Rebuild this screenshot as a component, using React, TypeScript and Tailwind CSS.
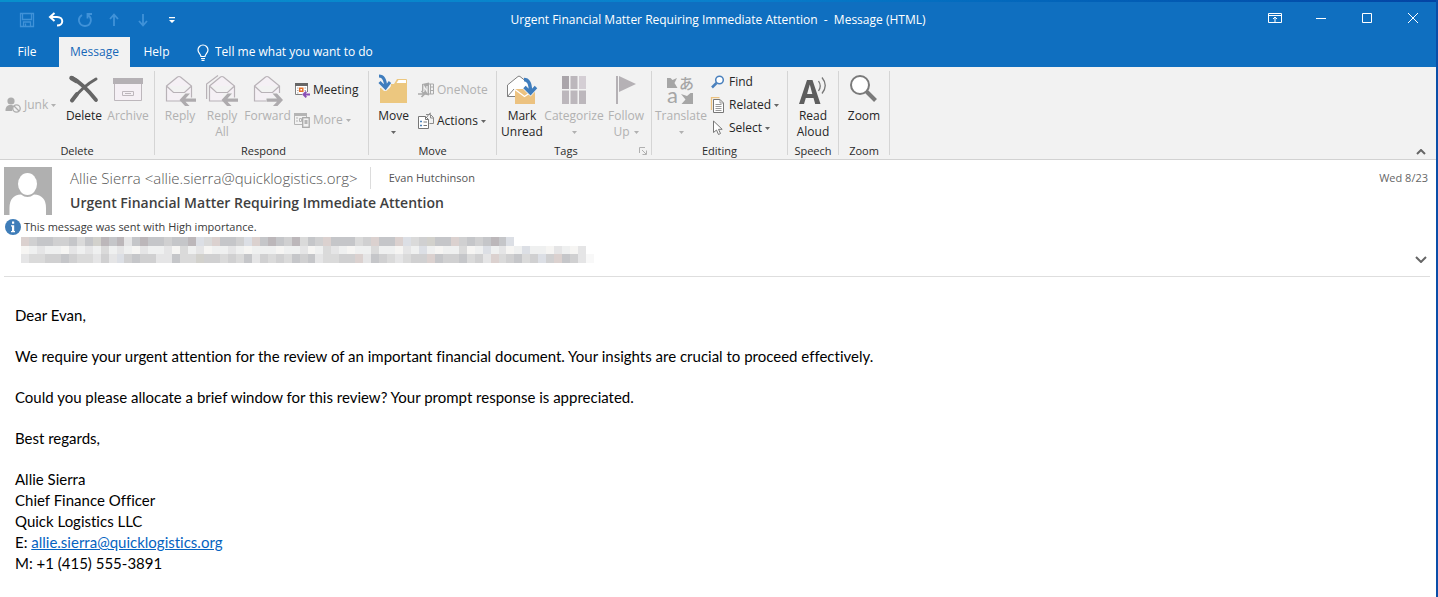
import type { ReactNode } from "react";

function Caret({ className = "" }: { className?: string }) {
  return (
    <svg viewBox="0 0 5 3" className={`h-[3px] w-[5px] shrink-0 ${className}`} fill="currentColor" aria-hidden="true">
      <path d="M0 0h5L2.5 3z" />
    </svg>
  );
}

function Group({ label, className, children, launcher }: { label: string; className: string; children: ReactNode; launcher?: boolean }) {
  return (
    <section aria-label={label} className={`flex h-[92px] shrink-0 pt-1 ${className}`}>
      <div className="flex min-w-0 grow flex-col">
        <div className="flex h-[72px] items-start">{children}</div>
        <div className="flex h-4 items-center">
          <span className="grow text-center text-[11px] leading-4 text-[#2b2b2b]">{label}</span>
          {launcher && (
            <button type="button" aria-label="Tags options" className="mx-1 text-[#b0b0b0]">
              <svg viewBox="0 0 8 8" className="size-2" fill="none" stroke="currentColor">
                <path d="M.5 6V.5H6M3 3l4 4M7.5 3.5v4h-4" />
              </svg>
            </button>
          )}
        </div>
      </div>
      <div className="mb-1 w-px bg-[#d5d5d5]" />
    </section>
  );
}

interface BigProps {
  icon: ReactNode;
  lines: string[];
  className: string;
  off?: boolean;
  caret?: "below" | "inline";
}

function Big({ icon, lines, className, off, caret }: BigProps) {
  const last = lines.length - 1;
  return (
    <button type="button" disabled={off} className={`flex shrink-0 flex-col items-center whitespace-nowrap text-[12px] leading-4 ${off ? "text-[#b1b1b1]" : "text-[#262626]"} ${className}`}>
      <span className="flex h-[37px] items-center justify-center">{icon}</span>
      {lines.map((l, i) => (
        <span key={l} className="flex items-center gap-1">
          {l}
          {caret === "inline" && i === last && <Caret />}
        </span>
      ))}
      {caret === "below" && (
        <span className="flex h-4 items-center">
          <Caret className={off ? "" : "text-[#666]"} />
        </span>
      )}
    </button>
  );
}

function Small({ icon, label, off, caret }: { icon: ReactNode; label: string; off?: boolean; caret?: boolean }) {
  return (
    <button type="button" disabled={off} className={`flex items-center gap-[3px] whitespace-nowrap text-[12px] leading-4 ${off ? "text-[#b1b1b1]" : "text-[#262626]"}`}>
      <span className="flex w-4 shrink-0 justify-center">{icon}</span>
      {label}
      {caret && <Caret className={off ? "" : "text-[#666]"} />}
    </button>
  );
}

const envelope = "M1.5 12 12.500 3q1.500-1 3 0l11 9V27H1.500zM1.500 12 8.500 18.500h11l7-6.500";

function ReplyIcon({ all, forward }: { all?: boolean; forward?: boolean }) {
  return (
    <svg viewBox="0 0 32 32" className="size-8" fill="#f5f0f5" stroke="#b8b2b7" strokeWidth="1.200" aria-hidden="true">
      {all && <path d="M.6 25V10L12 1.500" fill="none" />}
      <g transform={all ? "translate(2 0)" : "translate(1 0)"}>
        <path d={envelope} />
      </g>
      {forward ? (
        <g stroke="none">
          <path d="M21 19h9v13h-9zM14 23.500h8v5h-8z" fill="#f2f2f2" />
          <path d="m31 26-6-6.500h-4.500l4.500 5H14.500v3.200H25l-4.500 4.800H25z" fill="#aeabae" />
        </g>
      ) : (
        <g stroke="none">
          <path d="M17 19h9v13h-9zM25 23.500h6v5h-6z" fill="#f2f2f2" />
          <path d="m15.500 26 6-6.500H26l-4.500 5H32v3.200H21.500L26 32.500h-4.500z" fill="#aeabae" />
        </g>
      )}
    </svg>
  );
}

const JunkIcon = () => (
  <svg viewBox="0 0 16 16" className="size-4" aria-hidden="true">
    <circle cx="6" cy="4" r="3.600" fill="#adadad" />
    <path d="M.5 13.500c0-4 2-5.500 5-5.500 1.500 0 2.500.3 3.500 1L7 14H.5z" fill="#adadad" />
    <circle cx="11.500" cy="11.500" r="3.700" fill="#f2f2f2" stroke="#adadad" strokeWidth="1.300" />
    <path d="m9 9 5 5" stroke="#adadad" strokeWidth="1.300" />
  </svg>
);

const DeleteIcon = () => (
  <svg viewBox="0 0 32 32" className="size-8" fill="none" stroke="#666" strokeLinecap="round" aria-hidden="true">
    <path d="M4 4c8 4 16 12 24 22" strokeWidth="3.800" />
    <path d="M28 5C19 10 11 17 4 26.500" strokeWidth="3" />
    <path d="M9 20 4 26.500" strokeWidth="4" />
    <path d="m3.500 4 5 3" strokeWidth="4.500" />
  </svg>
);

const ArchiveIcon = () => (
  <svg viewBox="0 0 32 28" className="h-7 w-8" aria-hidden="true">
    <path d="M2.500 7h27v17.500h-27z" fill="#f5f0f5" stroke="#bdb7bc" />
    <path d="M1 2h30v6H1z" fill="#b5b1b5" />
    <path d="M10.500 15.500h11v4h-11zM13 17.500h6" fill="none" stroke="#bdb7bc" />
  </svg>
);

const MeetingIcon = () => (
  <svg viewBox="0 0 16 16" className="size-4" aria-hidden="true">
    <path d="M1.500 1.500h12v11h-12z" fill="#fff" stroke="#808080" />
    <path d="M1 1h13v3H1z" fill="#666" />
    <path d="M3 6h1.500M3 8.500h1.500M3 11h1.500M10.500 6H12M10.500 8.500H12" stroke="#aaa" />
    <path d="M5.700 6.200h3.100v3H5.700z" fill="#fff" stroke="#e5702a" strokeWidth="1.500" />
    <path d="M8 10h8v6H8z" fill="#f2f2f2" />
    <path d="M16 12.500h-6.500M12.300 9.700l-2.800 2.800 2.800 2.800" fill="none" stroke="#8a4fb5" strokeWidth="1.900" />
  </svg>
);

const MoreIcon = () => (
  <svg viewBox="0 0 16 16" className="size-4" aria-hidden="true">
    <path d="M.5 1.500h12v11H.5z" fill="none" stroke="#b5b5b5" />
    <path d="M0 1h13v3H0z" fill="#b5b5b5" />
    <path d="M2 6h2M2 9h2M5.500 6.500h2v3h-2z" fill="none" stroke="#b5b5b5" />
    <rect x="8.700" y="5.700" width="6.500" height="9.600" fill="#f2f2f2" stroke="#a8a8a8" strokeWidth="1.300" />
    <path d="M10.500 8h3v4h-3z" fill="#b5b5b5" />
  </svg>
);

const MoveIcon = () => (
  <svg viewBox="0 0 32 32" className="size-8" aria-hidden="true">
    <path d="M2 10h14l3-5h9q1 0 1 1v23H2z" fill="#ecc77f" />
    <path d="M20.500 6h7.500v3H18.500z" fill="#fff" />
    <path d="M0 0h13v12l-3 5H4l-4-5z" fill="#f2f2f2" />
    <path d="M2 14h1l4 4 6-5v6H2z" fill="#ecc77f" />
    <path d="M1 2q6.500 0 6.500 11M1.500 8l6 6 4.500-6" fill="none" stroke="#3f7dbd" strokeWidth="3" />
  </svg>
);

const OneNoteIcon = () => (
  <svg viewBox="0 0 16 16" className="size-4" fill="none" stroke="#aaa" aria-hidden="true">
    <path d="M10 2h5.500v10H10M12.500 2v10M13 5h3M13 8.500h3" />
    <path d="M4 2 11 .5v13L4 12z" fill="#aaa" stroke="none" />
    <path d="M6 9.500V4.500l3 5V4" stroke="#f2f2f2" strokeWidth="1.200" />
    <path d="M0 9h6v6H0z" fill="#f2f2f2" stroke="none" />
    <path d="M0 12h6M3.500 9l3 3-3 3" strokeWidth="1.700" />
  </svg>
);

const ActionsIcon = () => (
  <svg viewBox="0 0 16 18" className="h-[18px] w-4" fill="none" stroke="#777" aria-hidden="true">
    <path d="M8 2.500h4.500l3 3v6h-4M9 5q2-4 4-4M12.500 3v3h3" stroke="#8b8b8b" />
    <path d="M.5 4.500h7l3 3v9H.5z" fill="#fff" />
    <path d="M7.500 4.500v3h3M5.500 10H9M5.500 13.500H9" />
    <path d="M2.500 9h1v1h-1zM2.500 13h1v1h-1z" stroke="#4d82b8" />
  </svg>
);

const UnreadIcon = () => (
  <svg viewBox="0 0 32 32" className="size-8" aria-hidden="true">
    <path d="M1.500 22.500V11L12 2.500q1-.8 2 0l9 8V22.500" fill="#fff" />
    <path d="M9 22.500H1.500V11L12 2.500q1-.8 2 0l5 4M1.500 22.500 8 15" fill="none" stroke="#808080" />
    <path d="M9 15h20v15H9z" fill="#ecc280" />
    <path d="m9 15.500 9.500 7 10.500-7" fill="none" stroke="#fff" strokeWidth="1.300" />
    <path d="M18 5q7 0 7 11M18.500 13l6 6 5.500-6" fill="none" stroke="#f2f2f2" strokeWidth="5" />
    <path d="M18 5.500q6.500 0 6.500 12M18.500 13l6 6 5.500-6" fill="none" stroke="#3f7dbd" strokeWidth="3.400" />
  </svg>
);

const CategorizeIcon = () => (
  <svg viewBox="0 0 24 28" className="h-7 w-6" aria-hidden="true">
    <path d="M0 0h7v13H0z" fill="#aaa5aa" />
    <path d="M8.500 0h7v13h-7z" fill="#bcb7bc" />
    <path d="M17 0h7v13h-7z" fill="#d4ced4" />
    <path d="M0 14.500h7V28H0zM8.500 14.500h7V28h-7zM17 14.500h7V28h-7z" fill="#bcb7bc" />
  </svg>
);

const FlagIcon = () => (
  <svg viewBox="0 0 20 30" className="h-[30px] w-5" aria-hidden="true">
    <path d="M0 1h2v28H0z" fill="#b5b1b5" />
    <path d="m3 1 17 8L3 17z" fill="#b5b1b5" />
  </svg>
);

const TranslateIcon = () => (
  <svg viewBox="0 0 36 36" className="size-9" fill="#a6a6a6" aria-hidden="true">
    <path d="M4 6h3.500l2 2L14 6l-2.500 5 3 5H4zM30 32H18.500l4-4.500L18 22l6 2 3.500-3H30z" />
    <text x="16" y="17" fontSize="15" fontWeight="500" fontFamily="Noto Sans CJK JP, sans-serif">あ</text>
    <text x="4" y="31" fontSize="22" fontFamily="Lato, sans-serif">a</text>
  </svg>
);

const FindIcon = () => (
  <svg viewBox="0 0 16 16" className="size-4" fill="none" stroke="#4a80bd" aria-hidden="true">
    <circle cx="9.500" cy="6" r="3.800" strokeWidth="1.500" fill="#fff" />
    <path d="m6.500 9-4.500 4.500" strokeWidth="2.500" />
  </svg>
);

const RelatedIcon = () => (
  <svg viewBox="0 0 16 16" className="size-4" fill="none" aria-hidden="true">
    <path d="M1.500 13V.5h8" stroke="#ecc280" strokeWidth="1.300" />
    <path d="M3.500 2.500H10l3.500 3.500v9.500h-10z" fill="#fff" stroke="#777" />
    <path d="M10 2.500v3.500h3.500M5.500 7.500h6M5.500 9.500h6M5.500 11.500h6M5.500 13.500h6" stroke="#999" />
  </svg>
);

const SelectIcon = () => (
  <svg viewBox="0 0 16 16" className="size-4" fill="#fff" stroke="#777" aria-hidden="true">
    <path d="M3.500 1v11.500l3-2.500 2 4.500 2-1-2-4.200h3.700z" />
  </svg>
);

const ReadIcon = () => (
  <svg viewBox="0 0 30 30" className="size-[30px]" aria-hidden="true">
    <path fillRule="evenodd" d="M9 5h5.500l8 24h-5.300l-1.700-6H7.800L6 29H1zM11.800 9.500 9.100 19h5.200z" fill="#5e5e5e" />
    <path d="M20.500 6q3.500 5 0 10M24 2.500q6.500 8 0 16" fill="none" stroke="#777" strokeWidth="1.300" />
  </svg>
);

const ZoomIcon = () => (
  <svg viewBox="0 0 32 32" className="size-8" fill="none" stroke="#7a7a7a" aria-hidden="true">
    <circle cx="12" cy="11" r="9" fill="#fff" strokeWidth="2" />
    <path d="m18.500 17.500 9 9" strokeWidth="4" />
  </svg>
);

const shades: Record<string, string> = {
  a: "#dbd1cf", b: "#d0d0d1", c: "#c5c6c9", d: "#bcb7ba", e: "#dcdfe5",
  f: "#e5e5e6", g: "#eff0f0", h: "#f6f5f3", i: "#dadada", j: "#d2d1cc",
};

const redacted = [
  "abccbbcicjdcdfcdccbccdeiaccbeacdcbdicbacccibaccaeibjccabcbcdce",
  "hgfgghfgfgigfghfggfhigfhggfghggghggfhgifghggigghfgeghggihgegfhgeg",
  "fiibbcbiifbfebcbbffciijbbibicfbibicbcfiibbafcbifibbacbbcibfaibcibebacbf",
];

function Redaction() {
  return (
    <svg viewBox="0 0 576 26" preserveAspectRatio="none" className="h-[26px] w-[573px]" shapeRendering="crispEdges" role="img" aria-label="Hidden details">
      {redacted.map((row, r) =>
        [...row.padEnd(r === 0 ? 62 : 71, "ghf")].map((s, i) => (
          <rect key={`${r}-${i}`} x={i * 8} y={r === 0 ? 0 : r * 8 + 1} width="8" height="9" fill={shades[s]} />
        )),
      )}
      <rect x="568" y="17" width="8" height="9" fill="#f8f8f8" />
    </svg>
  );
}

function TitleBar() {
  return (
    <header className="grid h-[35px] grid-cols-[1fr_auto_1fr] items-center text-white">
      <div className="flex items-center gap-[13px] pl-[19px]">
        <button type="button" aria-label="Save" disabled>
          <svg viewBox="0 0 16 16" className="size-4" fill="none" stroke="#4092d8" strokeWidth="1.300">
            <path d="M1.500 1.500h13v13h-13zM3.500 2v5.500h9V2M4.500 14.500v-4.500h7v4.500M6.500 11.500v3" />
          </svg>
        </button>
        <button type="button" aria-label="Undo">
          <svg viewBox="0 0 16 16" className="size-4" fill="none" stroke="#fff" strokeWidth="2">
            <path d="M6.500 1 2 5l4.500 4M2.500 5H9c7 0 7 8.500 0 8.500" />
          </svg>
        </button>
        <button type="button" aria-label="Redo" disabled>
          <svg viewBox="0 0 16 16" className="size-4" fill="none" stroke="#4092d8" strokeWidth="1.800">
            <path d="M5 3C-.5 6.500 2 14 8 14s8-7.500 3-11M10.500 6.500V2h4.500" />
          </svg>
        </button>
        <button type="button" aria-label="Previous item" disabled>
          <svg viewBox="0 0 16 16" className="size-4" fill="none" stroke="#4092d8" strokeWidth="1.800">
            <path d="M8 14V3M4 7l4-4.500L12 7" />
          </svg>
        </button>
        <button type="button" aria-label="Next item" disabled>
          <svg viewBox="0 0 16 16" className="size-4" fill="none" stroke="#4092d8" strokeWidth="1.800">
            <path d="M8 2v11M4 9l4 4.500L12 9" />
          </svg>
        </button>
        <button type="button" aria-label="Customize toolbar">
          <svg viewBox="0 0 16 16" className="size-4" fill="#fff">
            <path d="M5 5h6v1.200H5zM5 8h6l-3 3z" />
          </svg>
        </button>
      </div>
      <h1 className="whitespace-pre text-[12px] leading-4">Urgent Financial Matter Requiring Immediate Attention  -  Message (HTML)</h1>
      <div className="flex items-center justify-end gap-8 pr-4 pb-1">
        <button type="button" aria-label="Ribbon display options">
          <svg viewBox="0 0 14 12" className="h-3 w-3.5" fill="none" stroke="#fff">
            <path d="M.5 1.500h13v9H.5zM.5 3.500h13M7 10V5M5 7l2-2 2 2" />
          </svg>
        </button>
        <button type="button" aria-label="Minimize">
          <svg viewBox="0 0 14 12" className="h-3 w-3.5" stroke="#fff"><path d="M2 6.500h10" /></svg>
        </button>
        <button type="button" aria-label="Maximize">
          <svg viewBox="0 0 14 12" className="h-3 w-3.5" fill="none" stroke="#fff"><path d="M2.500 1.500h9v9h-9z" /></svg>
        </button>
        <button type="button" aria-label="Close">
          <svg viewBox="0 0 14 12" className="h-3 w-3.5" stroke="#fff"><path d="m2 1 10 10M12 1 2 11" /></svg>
        </button>
      </div>
    </header>
  );
}

function Tabs() {
  return (
    <nav className="flex h-[30px] items-stretch text-[12px] leading-4 text-white">
      <button type="button" className="w-[54px]">File</button>
      <button type="button" aria-current="page" className="ml-[5px] w-[71px] bg-[#f2f2f2] text-[#1668b8]">Message</button>
      <button type="button" className="w-[53px]">Help</button>
      <label className="ml-3.5 flex grow items-center gap-1.5">
        <svg viewBox="0 0 12 17" className="h-[17px] w-3" fill="none" stroke="#fff" strokeWidth="1.200" aria-hidden="true">
          <path d="M4 12.500c0-2-3-3.500-3-6.500a5 5 0 0 1 10 0c0 3-3 4.500-3 6.500zM4 14.500h4M4.500 16.300h3" />
        </svg>
        <input type="text" aria-label="Tell me what you want to do" placeholder="Tell me what you want to do" className="w-56 bg-transparent outline-none placeholder:text-white" />
      </label>
    </nav>
  );
}

function Ribbon() {
  return (
    <div className="flex items-start justify-between border-b border-[#d2d2d2] bg-[#f2f2f2]">
      <div className="flex">
        <Group label="Delete" className="w-[155px]">
          <div className="flex h-[68px] w-[62px] items-center pl-[5px]">
            <Small icon={<JunkIcon />} label="Junk" off caret />
          </div>
          <Big className="w-11" icon={<DeleteIcon />} lines={["Delete"]} />
          <Big className="w-11" icon={<ArchiveIcon />} lines={["Archive"]} off />
        </Group>
        <Group label="Respond" className="w-[214px] pl-1">
          <Big className="w-[42px]" icon={<ReplyIcon />} lines={["Reply"]} off />
          <Big className="w-[42px]" icon={<ReplyIcon all />} lines={["Reply", "All"]} off />
          <Big className="w-[49px]" icon={<ReplyIcon forward />} lines={["Forward"]} off />
          <div className="flex flex-col gap-[14px] pt-[11px] pl-[2px]">
            <Small icon={<MeetingIcon />} label="Meeting" />
            <Small icon={<MoreIcon />} label="More" off caret />
          </div>
        </Group>
        <Group label="Move" className="w-32">
          <Big className="w-[49px]" icon={<MoveIcon />} lines={["Move"]} caret="below" />
          <div className="flex flex-col gap-[14px] pt-[11px]">
            <Small icon={<OneNoteIcon />} label="OneNote" off />
            <Small icon={<ActionsIcon />} label="Actions" caret />
          </div>
        </Group>
        <Group label="Tags" className="w-[155px]" launcher>
          <Big className="w-[50px]" icon={<UnreadIcon />} lines={["Mark", "Unread"]} />
          <Big className="w-[54px]" icon={<CategorizeIcon />} lines={["Categorize"]} off caret="below" />
          <Big className="w-[50px]" icon={<FlagIcon />} lines={["Follow", "Up"]} off caret="inline" />
        </Group>
        <Group label="Editing" className="w-[136px]">
          <Big className="w-[58px]" icon={<TranslateIcon />} lines={["Translate"]} off caret="below" />
          <div className="flex flex-col gap-[7px] pt-[3px]">
            <Small icon={<FindIcon />} label="Find" />
            <Small icon={<RelatedIcon />} label="Related" caret />
            <Small icon={<SelectIcon />} label="Select" caret />
          </div>
        </Group>
        <Group label="Speech" className="w-[51px]">
          <Big className="w-[50px]" icon={<ReadIcon />} lines={["Read", "Aloud"]} />
        </Group>
        <Group label="Zoom" className="w-[51px]">
          <Big className="w-[50px]" icon={<ZoomIcon />} lines={["Zoom"]} />
        </Group>
      </div>
      <button type="button" aria-label="Collapse the ribbon" className="mr-2.5 self-end pb-1">
        <svg viewBox="0 0 10 6" className="h-1.5 w-2.5" fill="none" stroke="#666" strokeWidth="2"><path d="m1 5 4-4 4 4" /></svg>
      </button>
    </div>
  );
}

function MessageHeader() {
  return (
    <div className="mx-1 mr-1.5 border-b border-[#dedede] pt-[7px] pb-[13px]">
      <div className="flex items-start">
        <svg viewBox="0 0 48 48" className="size-12 shrink-0" role="img" aria-label="Sender photo">
          <path d="M0 0h48v48H0z" fill="#b0b0b0" />
          <ellipse cx="23.500" cy="17" rx="9.500" ry="11" fill="#fff" />
          <path d="M5.500 48V41q0-13 11.500-13.500 6.500 5 13 0Q42 28 42 41v7z" fill="#fff" />
        </svg>
        <div className="min-w-0 grow pr-0.5 pl-[18px]">
          <div className="flex h-[22px] items-center">
            <span className="text-[15px] leading-5 font-light text-[#555]">Allie Sierra &lt;allie.sierra@quicklogistics.org&gt;</span>
            <span className="ml-3 h-[22px] w-px bg-[#dcdcdc]" />
            <span className="ml-[18px] text-[11px] leading-4 text-[#555]">Evan Hutchinson</span>
            <time className="ml-auto text-[11px] leading-4 text-[#666]">Wed 8/23</time>
          </div>
          <h2 className="mt-1 text-[14px] leading-5 font-semibold text-[#3f3f3f]">Urgent Financial Matter Requiring Immediate Attention</h2>
        </div>
      </div>
      <div className="mt-[3px] mb-px flex h-[18px] items-center gap-[3px] pl-px">
        <svg viewBox="0 0 16 16" className="size-4" aria-hidden="true">
          <circle cx="8" cy="8" r="8" fill="#3f7db8" />
          <path d="M7 2.500h2.200v2.200H7zM6 6.300h3.200V12H10v1.200H6V12h1V7.500H6z" fill="#fff" />
        </svg>
        <span className="text-[11px] leading-4 text-[#3a3a3a]">This message was sent with High importance.</span>
      </div>
      <div className="flex items-end justify-between pl-[17px]">
        <Redaction />
        <button type="button" aria-label="Expand header" className="mr-[3px]">
          <svg viewBox="0 0 12 8" className="h-2 w-3" fill="none" stroke="#666" strokeWidth="2"><path d="m1 2 5 5 5-5" /></svg>
        </button>
      </div>
    </div>
  );
}

function MessageBody() {
  return (
    <main className="space-y-5 px-[15px] pt-7 font-['Lato',sans-serif] text-[15px] leading-[21px] text-black [font-variant-ligatures:none]">
      <p>Dear Evan,</p>
      <p>We require your urgent attention for the review of an important financial document. Your insights are crucial to proceed effectively.</p>
      <p>Could you please allocate a brief window for this review? Your prompt response is appreciated.</p>
      <p>Best regards,</p>
      <address className="not-italic">
        Allie Sierra<br />
        Chief Finance Officer<br />
        Quick Logistics LLC<br />
        E: <a href="mailto:allie.sierra@quicklogistics.org" className="text-[#0563c1] underline">allie.sierra@quicklogistics.org</a><br />
        M: +1 (415) 555-3891
      </address>
    </main>
  );
}

export default function App() {
  return (
    <div className="min-h-screen border-r-2 border-[#0a4ea8] bg-white font-['Open_Sans',sans-serif]">
      <div className="bg-[#0f6fc0]">
        <div className="h-0.5 bg-linear-to-r from-[#0890cc] via-[#0a80cc] to-[#0444a4]" />
        <TitleBar />
        <Tabs />
      </div>
      <Ribbon />
      <MessageHeader />
      <MessageBody />
    </div>
  );
}
